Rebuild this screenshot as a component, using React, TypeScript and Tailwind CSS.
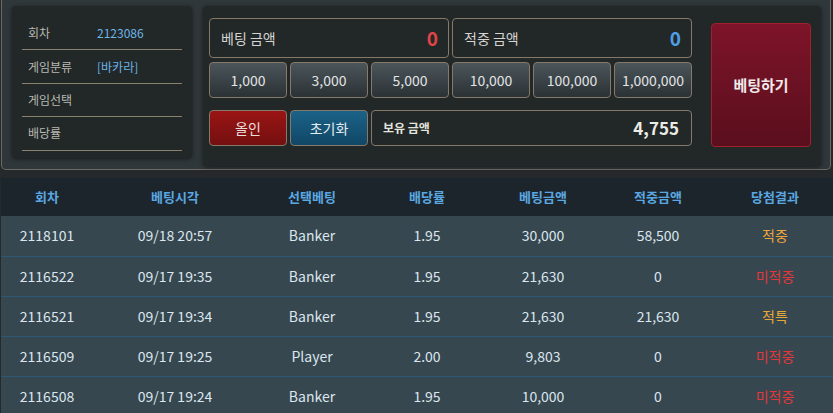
import React from "react"

const rows = [
  { round: "2118101", time: "09/18 20:57", pick: "Banker", odds: "1.95", bet: "30,000", win: "58,500", result: "적중" },
  { round: "2116522", time: "09/17 19:35", pick: "Banker", odds: "1.95", bet: "21,630", win: "0", result: "미적중" },
  { round: "2116521", time: "09/17 19:34", pick: "Banker", odds: "1.95", bet: "21,630", win: "21,630", result: "적특" },
  { round: "2116509", time: "09/17 19:25", pick: "Player", odds: "2.00", bet: "9,803", win: "0", result: "미적중" },
  { round: "2116508", time: "09/17 19:24", pick: "Banker", odds: "1.95", bet: "10,000", win: "0", result: "미적중" },
]

const chips = ["1,000", "3,000", "5,000", "10,000", "100,000", "1,000,000"]

const resultColor = (r: string) => {
  if (r === "미적중") return "text-[#e0383c]"
  if (r === "적특") return "text-[#e8a838]"
  return "text-[#eda53c]"
}

const InfoRow = ({ label, value }: { label: string; value?: string }) => (
  <div className="flex h-[33.4px] items-center border-b border-[#8a8070] pl-[6px] text-[12px]">
    <span className="w-[69px] text-[#b8b9b1]">{label}</span>
    {value && <span className="text-[#6cb6e6]">{value}</span>}
  </div>
)

export default function App() {
  return (
    <div
      className="h-[413px] w-[833px] overflow-hidden bg-[#25292b]"
      style={{ fontFamily: '"Noto Sans CJK KR", "Noto Sans", sans-serif' }}
    >
      {/* top betting panel */}
      <div className="ml-px flex h-[170px] w-[830px] gap-[11px] rounded-b-[5px] border-x border-b border-[#6b6a64] bg-[#30373a] pl-[10px] pt-[6px]">
        <div className="h-[152px] w-[180px] rounded-[4px] bg-[#222728] px-[10px] pt-[11px] shadow-[0_1px_4px_rgba(0,0,0,0.5)]">
          <InfoRow label="회차" value="2123086" />
          <InfoRow label="게임분류" value="[바카라]" />
          <InfoRow label="게임선택" />
          <InfoRow label="배당률" />
        </div>

        <div className="flex h-[160px] w-[618px] rounded-[4px] bg-[#222728] pl-[6px] pt-[12px] shadow-[0_1px_4px_rgba(0,0,0,0.5)]">
          <div className="flex w-[483px] flex-col">
            <div className="flex gap-[3px]">
              <div className="flex h-[40px] w-[240px] items-center justify-between rounded-[4px] border border-[#85796a] pl-[11px] pr-[10px]">
                <span className="text-[14px] text-[#d4d4d0]">베팅 금액</span>
                <span className="text-[19px] font-bold text-[#e04446]">0</span>
              </div>
              <div className="flex h-[40px] w-[240px] items-center justify-between rounded-[4px] border border-[#85796a] pl-[11px] pr-[10px]">
                <span className="text-[14px] text-[#d4d4d0]">적중 금액</span>
                <span className="text-[19px] font-bold text-[#4e9fe4]">0</span>
              </div>
            </div>

            <div className="mt-[4px] flex gap-[3px]">
              {chips.map((c) => (
                <button
                  key={c}
                  className="h-[36px] w-[78px] rounded-[4px] border border-[#85796a] bg-gradient-to-b from-[#4b555a] to-[#2b3236] text-[14px] text-[#e2e4e4]"
                >
                  {c}
                </button>
              ))}
            </div>

            <div className="mt-[12px] flex gap-[3px]">
              <button className="h-[36px] w-[78px] rounded-[4px] border border-[#85796a] bg-gradient-to-b from-[#9a1414] to-[#741010] text-[14px] text-[#ecdede]">
                올인
              </button>
              <button className="h-[36px] w-[78px] rounded-[4px] border border-[#85796a] bg-gradient-to-b from-[#1b6288] to-[#114766] text-[14px] text-[#e4ecf0]">
                초기화
              </button>
              <div className="flex h-[36px] w-[321px] items-center justify-between rounded-[4px] border border-[#85796a] pl-[11px] pr-[12px]">
                <span className="text-[12px] font-bold text-[#e4e4de]">보유 금액</span>
                <span className="text-[17px] font-bold text-[#ecebe6]">4,755</span>
              </div>
            </div>
          </div>

          <button className="ml-[19px] mt-[5px] h-[124px] w-[100px] rounded-[4px] border border-[#a0202c] bg-gradient-to-b from-[#7e1429] to-[#5a0e1d] text-[15px] font-bold text-[#f0eaea]">
            베팅하기
          </button>
        </div>
      </div>

      {/* bet history */}
      <table className="ml-px mt-[8px] w-[832px] table-fixed border-collapse text-[14px]">
        <colgroup>
          <col className="w-[92px]" />
          <col className="w-[164px]" />
          <col className="w-[110px]" />
          <col className="w-[120px]" />
          <col className="w-[112px]" />
          <col className="w-[118px]" />
          <col className="w-[116px]" />
        </colgroup>
        <thead>
          <tr className="h-[38px] bg-[#1d252c] text-[13px] font-bold text-[#5aa8e2]">
            <th className="font-bold">회차</th>
            <th className="font-bold">베팅시각</th>
            <th className="font-bold">선택베팅</th>
            <th className="font-bold">배당률</th>
            <th className="font-bold">베팅금액</th>
            <th className="font-bold">적중금액</th>
            <th className="font-bold">당첨결과</th>
          </tr>
        </thead>
        <tbody>
          {rows.map((r) => (
            <tr key={r.round} className="h-[40px] border-b border-[#2c5878] bg-[#37474f] text-center text-[#dbe6ee]">
              <td>{r.round}</td>
              <td>{r.time}</td>
              <td>{r.pick}</td>
              <td>{r.odds}</td>
              <td>{r.bet}</td>
              <td>{r.win}</td>
              <td className={resultColor(r.result)}>{r.result}</td>
            </tr>
          ))}
        </tbody>
      </table>
    </div>
  )
}
